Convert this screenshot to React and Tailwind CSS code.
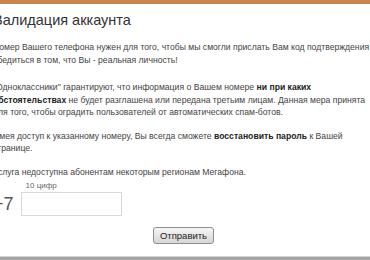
export default function App() {
  return (
    <div className="flex h-[260px] w-[370px] flex-col overflow-hidden bg-white font-['Liberation_Sans',Arial,sans-serif] text-[#333]">
      <div className="h-[4px] shrink-0 bg-[#c8844c]" />
      <div className="ml-[-7px] w-[381px] flex-1">
        <h1 className="mt-[7px] text-[14.5px] leading-[18px] text-[#333]">Валидация аккаунта</h1>

        <div className="mt-[12px] whitespace-nowrap text-[8.65px] leading-[12.5px] text-[#444]">
          <p>
            Номер Вашего телефона нужен для того, чтобы мы смогли прислать Вам код подтверждения и
            <br />
            убедиться в том, что Вы - реальная личность!
          </p>
          <p className="mt-[15px]">
            "Одноклассники" гарантируют, что информация о Вашем номере{" "}
            <b className="text-[#222]">ни при каких</b>
            <br />
            <b className="text-[#222]">обстоятельствах</b> не будет разглашена или передана третьим
            лицам. Данная мера принята
            <br />
            для того, чтобы оградить пользователей от автоматических спам-ботов.
          </p>
          <p className="mt-[11px]">
            Имея доступ к указанному номеру, Вы всегда сможете{" "}
            <b className="text-[#222]">восстановить пароль</b> к Вашей
            <br />
            странице.
          </p>
          <p className="mt-[11px]">Услуга недоступна абонентам некоторым регионам Мегафона.</p>
        </div>

        <div className="mt-[3px] flex items-end gap-[7px]">
          <span className="mb-[2px] text-[18px] leading-[20px] text-[#555]">+7</span>
          <div className="flex flex-col">
            <span className="ml-[5px] text-[8px] leading-[9px] text-[#666]">10 цифр</span>
            <input
              type="text"
              className="mt-[2px] h-[24px] w-[101px] border border-[#d8d8d8] bg-white outline-none"
            />
          </div>
        </div>

        <div className="mt-[11px] flex justify-center">
          <button className="h-[17px] rounded-[3px] border border-[#8e8e8e] bg-gradient-to-b from-[#f6f6f6] to-[#d6d6d6] px-[6px] text-[9.5px] leading-[13px] text-[#222]">
            Отправить
          </button>
        </div>
      </div>
      <div className="h-[1px] shrink-0 bg-[#d0d0d0]" />
      <div className="h-[3px] shrink-0 bg-[#a6a6a6]" />
    </div>
  );
}
